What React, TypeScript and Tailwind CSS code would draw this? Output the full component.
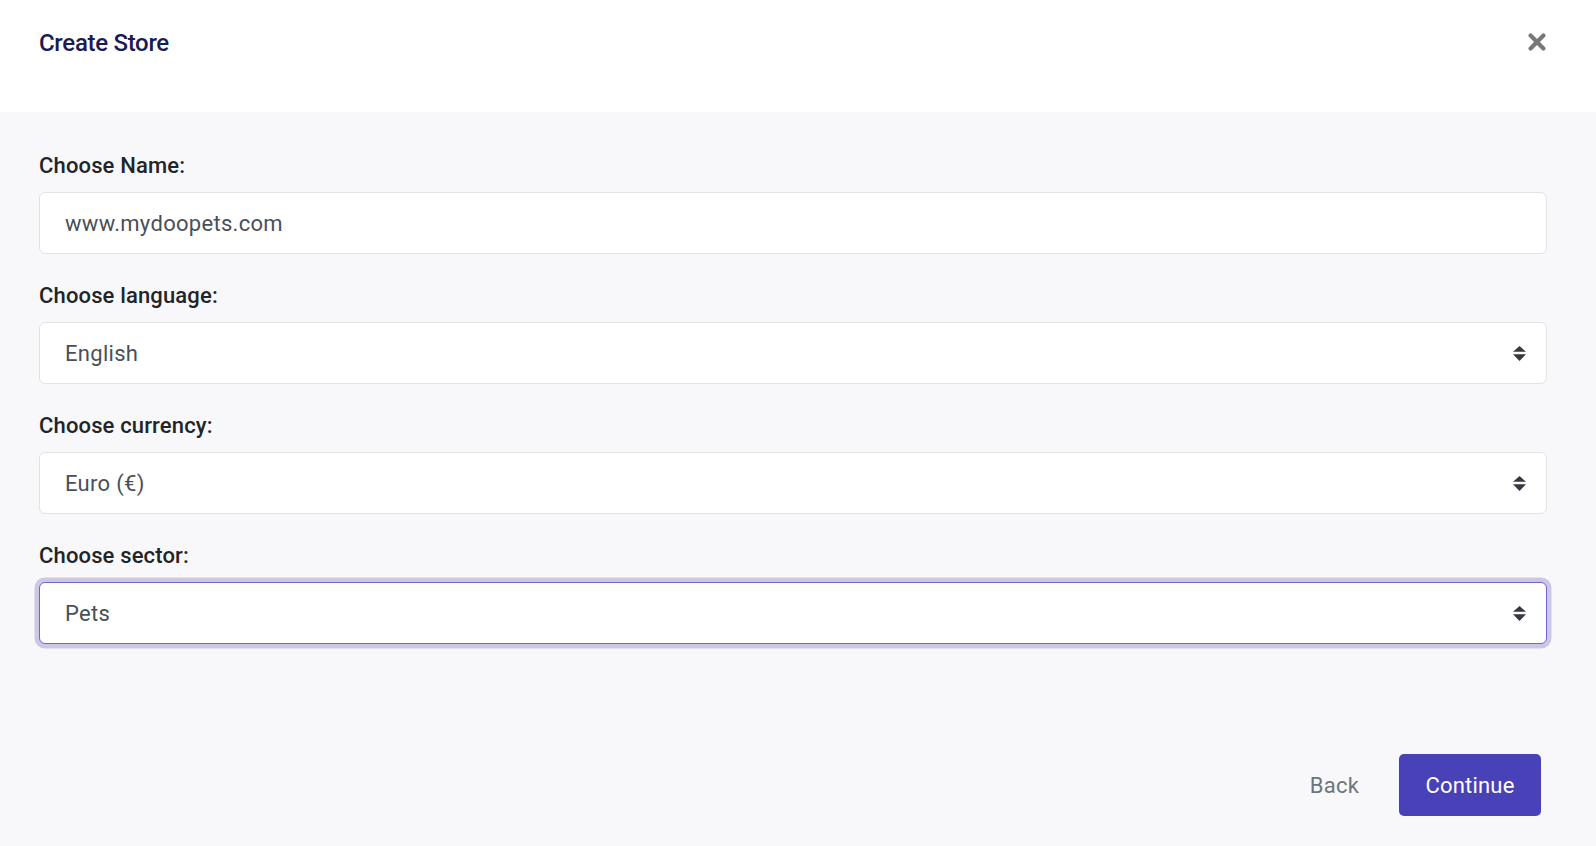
import React from "react";

function Arrows() {
  return (
    <svg width="13" height="15" viewBox="0 0 13 15" className="shrink-0">
      <polygon points="6.5,0 13,5.7 0,5.7" fill="#343a40" />
      <polygon points="0,8.3 13,8.3 6.5,15" fill="#343a40" />
    </svg>
  );
}

function Field({
  label,
  value,
  select,
  focused,
}: {
  label: string;
  value: string;
  select?: boolean;
  focused?: boolean;
}) {
  return (
    <div className="flex flex-col">
      <div className="text-[22px] leading-[33px] font-medium text-[#212529] tracking-[0.15px] mb-[10px]">{label}</div>
      <div
        className={
          focused
            ? "h-[62px] bg-white rounded-[6px] border border-[#6d64d8] shadow-[0_0_0_4.5px_#cbc7e5] flex items-center pl-[25px] pr-[20px]"
            : "h-[62px] bg-white rounded-[6px] border border-[#e2e2e7] flex items-center pl-[25px] pr-[20px]"
        }
      >
        <span className="flex-1 text-[22px] text-[#495057] leading-none tracking-[0.3px] mt-[2px]">{value}</span>
        {select && <Arrows />}
      </div>
    </div>
  );
}

export default function App() {
  return (
    <div className="h-screen w-full flex flex-col font-['Roboto',sans-serif]">
      <div className="h-[112px] shrink-0 bg-white flex items-start justify-between pl-[39px] pr-[50px] pt-[31px]">
        <h1 className="text-[24px] leading-[24px] font-medium text-[#1c1a52] tracking-[-0.3px]">Create Store</h1>
        <svg width="18" height="18" viewBox="0 0 18 18" className="mt-[2px]">
          <path d="M2.6 2.6 L15.4 15.4 M15.4 2.6 L2.6 15.4" stroke="#787878" strokeWidth="4.2" strokeLinecap="round" />
        </svg>
      </div>
      <div className="flex-1 bg-[#f8f8fa] pl-[39px] pr-[49px] pt-[37px] pb-[30px] flex flex-col">
        <div className="flex flex-col gap-[25px]">
          <Field label="Choose Name:" value="www.mydoopets.com" />
          <Field label="Choose language:" value="English" select />
          <Field label="Choose currency:" value="Euro (€)" select />
          <Field label="Choose sector:" value="Pets" select focused />
        </div>
        <div className="mt-auto flex items-center justify-end mr-[6px]">
          <button className="text-[22px] text-[#6c757d] mr-[40px] leading-none pt-[2px] tracking-[0.2px]">Back</button>
          <button className="w-[142px] h-[62px] rounded-[5px] bg-[#4841b8] text-white text-[22px] leading-none pt-[2px] tracking-[0.2px] flex items-center justify-center">
            Continue
          </button>
        </div>
      </div>
    </div>
  );
}
